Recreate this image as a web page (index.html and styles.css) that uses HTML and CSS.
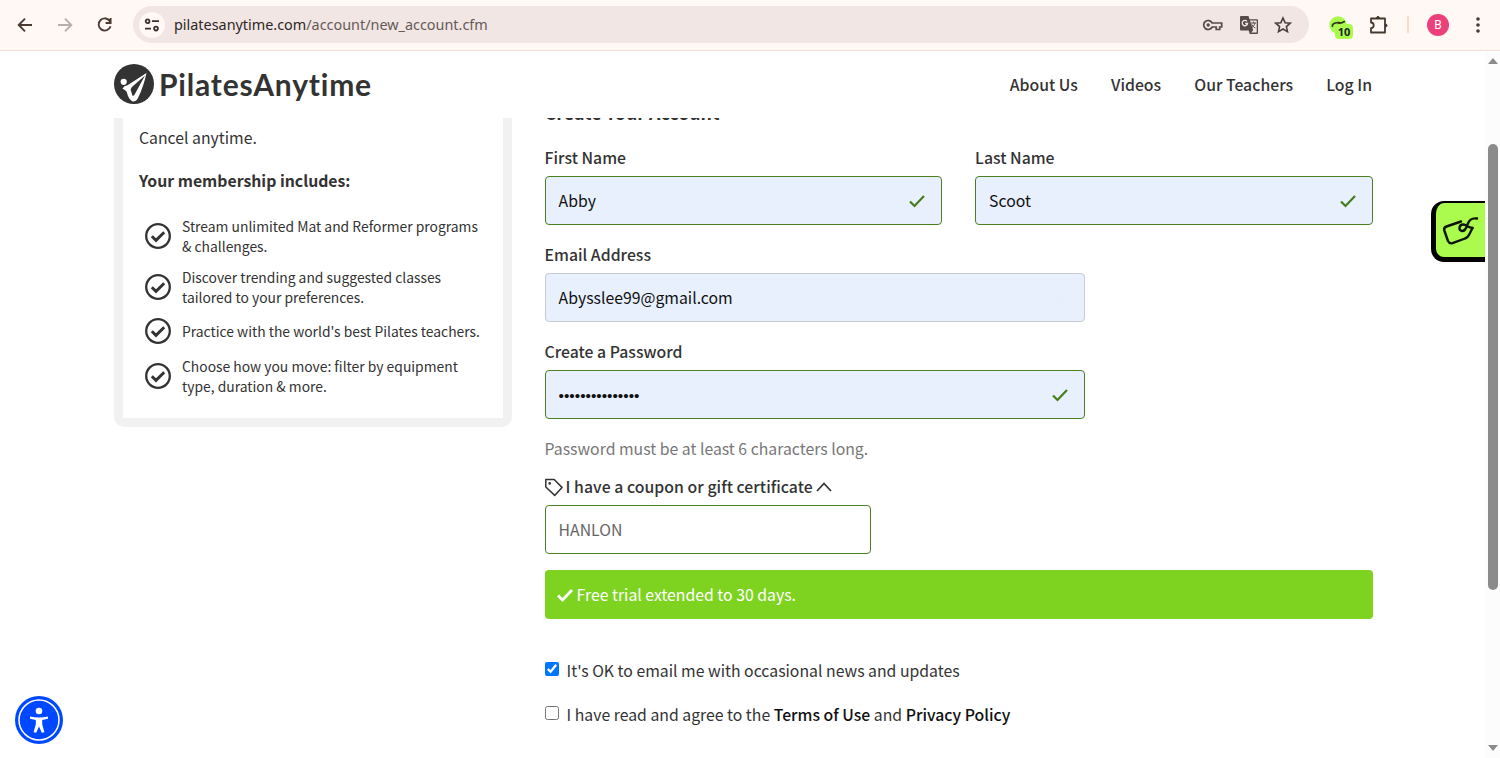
FILE: index.html
```
<!DOCTYPE html>
<html lang="en">

<head>
	<meta charset="utf-8">
	<title>Pilates Anytime - Create Your Account</title>
	<link rel="stylesheet" href="styles.css">
</head>

<body>
	<!-- shared icons -->
	<svg class="sprite">
		<symbol id="check" viewBox="0 0 16 14"><path d="M1 7.5l4.5 4.5L15 2" fill="none" stroke="currentColor" stroke-width="2.2"/></symbol>
		<symbol id="circle-check" viewBox="0 0 26 26"><circle cx="13" cy="13" r="11.8" fill="none" stroke="currentColor" stroke-width="2.3"/><path d="M6.8 13.2l4.2 4.2 8.2-8.2" fill="none" stroke="currentColor" stroke-width="2.9"/></symbol>
	</svg>

	<div class="toolbar">
		<svg class="nav-icon" viewBox="0 0 20 20"><path d="M17 10H4M10 3.7L3.7 10l6.3 6.3"/></svg>
		<svg class="nav-icon off" viewBox="0 0 20 20"><path d="M3 10h13M10 3.7l6.3 6.3-6.3 6.3"/></svg>
		<svg class="nav-icon" viewBox="0 0 20 20"><path d="M15.2 6.7A6.1 6.1 0 1 0 15.6 11.3M15.6 3v5h-5"/></svg>
		<div class="address">
			<span class="site-info">
				<svg width="16" height="14" viewBox="0 0 16 14" fill="none" stroke="#3b3230" stroke-width="1.8"><circle cx="3.6" cy="3.2" r="1.9"/><path d="M8 3.2h7M1 10.6h6"/><circle cx="12" cy="10.6" r="1.9"/></svg>
			</span>
			<span class="url">pilatesanytime.com<span>/account/new_account.cfm</span></span>
			<div class="address-icons">
				<svg width="22" height="14" viewBox="0 0 22 14" fill="none" stroke="#574a47" stroke-width="1.7"><path d="M10.2 5h9.5v4h-2v2.500h-3.500V9h-4a4.5 4.5 0 1 1 0-4z"/><circle cx="6.200" cy="7" r="1.7" fill="#574a47" stroke="none"/></svg>
				<svg width="20" height="20" viewBox="0 0 20 20"><path d="M2 1h7.5l1 3.2H18a1 1 0 0 1 1 1V18a1 1 0 0 1-1 1h-7.3l-1-3.4H2a1 1 0 0 1-1-1V2a1 1 0 0 1 1-1z" fill="#574a47"/><path d="M11 5.5h6.7v12h-5.5l2-2.2z" fill="#f1e6e4"/><path d="M12 8h5M14.4 6.6V8M16 8c-.5 2-1.6 3.4-3 4.5M12.7 9.4c1 1.7 2.2 2.8 3.6 3.8" fill="none" stroke="#574a47"/><path d="M8 6.3a2.7 2.7 0 1 0 .6 2.2H6.2" fill="none" stroke="#f1e6e4" stroke-width="1.3"/></svg>
				<svg width="18" height="18" viewBox="0 0 18 18" fill="none" stroke="#4b403e" stroke-width="1.6"><path d="M9 2l2.1 4.7 5.1.5-3.8 3.4 1.1 5L9 13l-4.5 2.6 1.1-5-3.8-3.4 5.1-.5z"/></svg>
			</div>
		</div>
		<div class="extension">
			<svg width="20" height="20" viewBox="0 0 20 20"><circle cx="9" cy="9" r="8.7" fill="#aafb4d"/><path d="M3.5 11c-1-3 2-4.2 5.5-4.5 2-.2 2.5 1 4 .2 1-.6 1.5-1.2 3-1M9 9.5c0-2 2-3 4-2.5" fill="none" stroke="#2a3a1c" stroke-width="1.6"/></svg>
			<span class="count">10</span>
		</div>
		<svg class="puzzle" width="20" height="20" viewBox="0 0 20 20"><path d="M2 3.5h14v14H2v-4.3c3.6-.3 3.600-5.400 0-5.700z" fill="none" stroke="#45382f" stroke-width="1.8" stroke-linejoin="round"/><path d="M7.500 3a1.500 1.500 0 0 1 3 0zM16.500 9a1.500 1.500 0 0 1 0 3z" fill="#45382f" stroke="#45382f"/></svg>
		<span class="divider"></span>
		<span class="avatar">B</span>
		<svg class="dots" width="4" height="18" viewBox="0 0 4 18" fill="#45382f"><circle cx="2" cy="3" r="1.8"/><circle cx="2" cy="9" r="1.8"/><circle cx="2" cy="15" r="1.8"/></svg>
	</div>

	<div class="page">
		<header class="site-header">
			<a class="logo">
				<svg width="40" height="40" viewBox="0 0 40 40"><circle cx="20" cy="20" r="20" fill="#333"/><circle cx="9.7" cy="17.8" r="3.1" fill="#fff"/><path d="M8.500 24.500Q10 21.800 13.500 21.300L32.500 9Q29.500 23 24 34Q22 38 18.500 37.500Q14 34.500 13 28.800Q12.200 26.500 8.500 24.500z" fill="#fff"/><path d="M31 11.500L18.500 22.600q-2.800 2.500-1.200 5.200l1 3.700q1.200.8 2.200-.8z" fill="#333"/></svg>
				<span>PilatesAnytime</span>
			</a>
			<nav class="menu">
				<a>About Us</a>
				<a>Videos</a>
				<a>Our Teachers</a>
				<a>Log In</a>
			</nav>
		</header>

		<main class="content">
			<aside class="membership">
				<p class="cancel">Cancel anytime.</p>
				<h4>Your membership includes:</h4>
				<ul>
					<li><svg><use href="#circle-check"/></svg><span>Stream unlimited Mat and Reformer programs<br>&amp; challenges.</span></li>
					<li><svg><use href="#circle-check"/></svg><span>Discover trending and suggested classes<br>tailored to your preferences.</span></li>
					<li class="single"><svg><use href="#circle-check"/></svg><span>Practice with the world's best Pilates teachers.</span></li>
					<li><svg><use href="#circle-check"/></svg><span>Choose how you move: filter by equipment<br>type, duration &amp; more.</span></li>
				</ul>
			</aside>

			<form class="signup">
				<h3>Create Your Account</h3>
				<div class="names">
					<div class="field">
						<label>First Name</label>
						<div class="input valid"><span>Abby</span><svg><use href="#check"/></svg></div>
					</div>
					<div class="field">
						<label>Last Name</label>
						<div class="input valid"><span>Scoot</span><svg><use href="#check"/></svg></div>
					</div>
				</div>
				<div class="field medium">
					<label>Email Address</label>
					<div class="input"><span>Abysslee99@gmail.com</span><svg class="faded"><use href="#check"/></svg></div>
				</div>
				<div class="field medium">
					<label>Create a Password</label>
					<div class="input valid"><span class="password">•••••••••••••••</span><svg><use href="#check"/></svg></div>
				</div>
				<p class="hint">Password must be at least 6 characters long.</p>
				<div class="coupon-toggle">
					<svg width="18" height="19" viewBox="0 0 18 19" fill="none" stroke="#333" stroke-width="1.5"><path d="M.8 1.5h8.4l7.8 7.9-7.3 8L.8 9z" stroke-linejoin="round"/><circle cx="4.7" cy="5.4" r="1.3" fill="#333" stroke="none"/></svg>
					<span>I have a coupon or gift certificate</span>
					<svg width="16" height="10" viewBox="0 0 16 10" fill="none" stroke="#333" stroke-width="1.7"><path d="M1 9l7-7.5L15 9"/></svg>
				</div>
				<div class="input valid coupon"><span>HANLON</span></div>
				<div class="success"><svg viewBox="0 0 16 14"><path d="M1 7.500l4.500 4.500L15 2" fill="none" stroke="#fff" stroke-width="2.800"/></svg><span>Free trial extended to 30 days.</span></div>
				<div class="option"><input type="checkbox" checked><span>It's OK to email me with occasional news and updates</span></div>
				<div class="option"><input type="checkbox"><span>I have read and agree to the <b>Terms of Use</b> and <b>Privacy Policy</b></span></div>
			</form>
		</main>
	</div>

	<!-- floating widgets -->
	<div class="scrollbar"><i class="up"></i><i class="thumb"></i><i class="down"></i></div>
	<div class="coupon-tab">
		<svg width="38" height="30" viewBox="0 0 38 30" fill="none" stroke="#0b1505" stroke-width="2.4" stroke-linecap="round" stroke-linejoin="round"><path d="M19 4.500L4.500 9.500q-3 1-2.200 4L6 24q1.500 3 4.500 2.200L23 21.500q3-1 4.200-4l3.300-6.500"/><path d="M35 1.500c-6-.8-8 1.500-9.500 6-1.300 4-2.600 7-5.700 6.500-3.500-.8-2.800-6 .7-6.500 4-.5 5 3 10 3.500"/></svg>
	</div>
	<div class="accessibility">
		<svg width="48" height="48" viewBox="0 0 48 48"><circle cx="24" cy="24" r="24" fill="#0048ff"/><circle cx="24" cy="24" r="20" fill="none" stroke="#fff" stroke-width="1.5"/><circle cx="24" cy="15" r="3.3" fill="#fff"/><path d="M15 20.5q9 2 18 0v2.2l-5.8 1.2v4.3l2.2 8-2.6.6L24 30.5l-2.8 6.3-2.6-.6 2.2-8v-4.3L15 22.7z" fill="#fff"/></svg>
	</div>
</body>

</html>
```
FILE: styles.css
```
* {box-sizing: border-box; padding: 0; margin: 0;}
body {width: 1500px; height: 758px; overflow: hidden; background: #fff; color: #333; font: 15.8px/24px "Noto Sans CJK SC", "Open Sans", sans-serif;}
svg {display: block; flex: none;}
.sprite {display: none;}

/* browser toolbar */
.toolbar {display: flex; align-items: center; height: 51px; padding: 0 20px 1px 15px; background: #fff8f4; border-bottom: 1px solid #f3ded5;}
.nav-icon {width: 20px; height: 20px; margin-right: 20px; fill: none; stroke: #4b3a31; stroke-width: 1.9;}
.nav-icon.off {stroke: #b7afab;}
.address {display: flex; align-items: center; width: 1178px; height: 37px; margin-left: -2px; padding-left: 6px; border-radius: 19px; background: #f1e6e4;}
.site-info {display: flex; align-items: center; justify-content: center; width: 26px; height: 26px; border-radius: 50%; background: #fff8f4;}
.url {margin-left: 9px; font: 14.4px/20px "Noto Sans", sans-serif; color: #2f2725;}
.url span {color: #665a57;}
.address-icons {display: flex; align-items: center; gap: 15px; margin-left: auto; margin-right: 17px;}
.extension {position: relative; margin-left: 20px;}
.count {position: absolute; left: 6px; top: 10px; width: 18px; height: 15px; border-radius: 4px; background: #aafb4d; color: #222; font: bold 11px/16px "Open Sans", sans-serif; text-align: center;}
.extension svg {margin-top: 2px;}
.puzzle {margin-left: 20px;}
.divider {width: 2px; height: 17px; margin-left: 18px; background: #fbdfc2;}
.avatar {width: 22px; height: 22px; margin-left: 18px; border-radius: 50%; background: #ec407a; color: #fff; font: 12px/22px Roboto, sans-serif; text-align: center;}
.dots {margin-left: 27px;}

/* site header */
.page {width: 1259px; margin-left: 114px;}
.site-header {display: flex; align-items: center; justify-content: space-between; height: 67px; padding-right: 1px;}
.logo {display: flex; align-items: center; gap: 5px; margin-top: -1px;}
.logo span {margin-top: -1px; font: bold 30px/40px Lato, sans-serif; letter-spacing: .8px;}
.menu {display: flex; gap: 33.2px; font-weight: 500;}

/* content scrolled under the header */
.content {display: flex; align-items: flex-start; gap: 32.6px; height: 640px; overflow: hidden;}
.membership {width: 398px; height: 309px; padding: 8px 0 0 16px; border: 9px solid #f1f1f1; border-top: 0; border-radius: 0 0 10px 10px;}
.membership h4 {margin-top: 19px; font-size: 15.8px;}
.membership ul {margin-top: 23px; list-style: none;}
.membership li {display: flex; align-items: center; height: 40px; margin-bottom: 11px; font-size: 13.86px; line-height: 20px; white-space: nowrap;}
.membership li.single {height: 26px; margin-bottom: 12px;}
.membership li svg {width: 26px; height: 26px; margin: 0 11px 0 6px;}

.signup {width: 828px;}
.signup h3 {height: 28px; margin-top: -20px; font-size: 17.8px; line-height: 28px;}
.names {display: flex; gap: 33px; margin-top: 20px;}
.names .field {flex: 1;}
.field {margin-bottom: 18px;}
.field.medium {width: 540px;}
.field label {display: block; height: 30px; font-weight: 500;}
.input {display: flex; align-items: center; justify-content: space-between; height: 49px; padding: 0 16px 0 13px; border: 1px solid #c8cbd2; border-radius: 4px; background: #e8f0fe; color: #111;}
.input.valid {border-color: #4b8022;}
.input span {padding-top: 1px;}
.input svg {width: 16px; height: 14px; color: #467d1c;}
.input svg.faded {color: #e8eff8;}
.input .password {padding-top: 3px; font-family: "Liberation Sans", sans-serif; font-size: 15.4px;}
.hint {color: #777;}
.coupon-toggle {display: flex; align-items: center; gap: 3px; margin-top: 14px; font-weight: 500; letter-spacing: .04px;}
.input.coupon {width: 326px; margin-top: 6px; background: #fff; color: #666;}
.success {display: flex; align-items: center; gap: 4px; height: 49px; margin: 16px 0 40px; padding: 1px 0 0 12px; border-radius: 4px; background: #7ed321; color: #fff;}
.success svg {width: 16px; height: 14px;}
.option {display: flex; height: 24px; margin-bottom: 20px;}
.option input {width: 14px; height: 14px; margin: 3px 8px 0 0;}
.option b {font-weight: 500; color: #111;}

/* floating widgets */
.scrollbar {position: absolute; top: 52px; right: 0; width: 15px; height: 706px; background: #fcfcfc;}
.scrollbar i {position: absolute; left: 3px;}
.up {top: 6px; border: 5px solid transparent; border-top: 0; border-bottom: 6px solid #8b8b8b;}
.down {bottom: 7px; border: 5px solid transparent; border-bottom: 0; border-top: 6px solid #8b8b8b;}
.thumb {top: 92px; width: 10px; height: 446px; border-radius: 5px; background: #8b8b8b;}
.coupon-tab {position: absolute; top: 201px; left: 1431px; width: 54px; height: 61px; padding: 14px 0 0 6px; border: solid #000; border-width: 2px 0 5px 5px; border-radius: 13px 0 0 13px; background: #aafb4d;}
.accessibility {position: absolute; left: 15px; top: 696px;}
```
